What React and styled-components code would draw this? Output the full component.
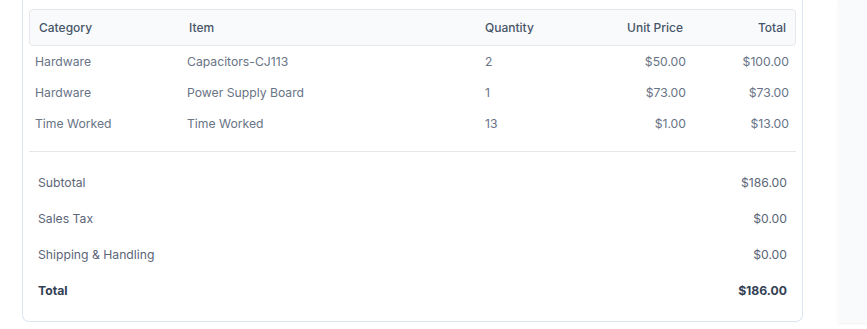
import styled, { createGlobalStyle } from "styled-components";

const GlobalStyle = createGlobalStyle`
  body {
    margin: 0;
    background: #ffffff;
    font-family: Inter, "Noto Sans", "Liberation Sans", sans-serif;
  }
`;

const Page = styled.div`
  display: flex;
  align-items: flex-start;
  gap: 35px;
  padding-left: 22px;
  height: 329px;
  overflow: hidden;
`;

const Card = styled.section`
  width: 781px;
  box-sizing: border-box;
  border: 1px solid #dce6f2;
  border-top: none;
  border-radius: 0 0 7px 7px;
  padding: 9px 6px 13px;
  background: #fff;
`;

const HeadRow = styled.div`
  display: grid;
  grid-template-columns: 150px 296px 100px 98px 103px;
  align-items: center;
  height: 37px;
  box-sizing: border-box;
  padding: 0 9px;
  background: #f9fafb;
  border: 1px solid #e5e7eb;
  border-radius: 4px;
  color: #475569;
  font-size: 12px;
  font-weight: 500;
`;

const BodyRow = styled.div`
  display: grid;
  grid-template-columns: 152px 298px 100px 101px 103px;
  align-items: center;
  height: 31px;
  padding: 0 6px;
  color: #687386;
  font-size: 12.2px;
`;

const Cell = styled.span`
  text-align: ${(p) => (p.$right ? "right" : "left")};
  white-space: nowrap;
`;

const Rows = styled.div`
  padding-bottom: 12px;
  border-bottom: 1px solid #e5e7eb;
`;

const Summary = styled.div`
  padding: 12px 9px 0;
`;

const SumRow = styled.div`
  display: flex;
  justify-content: space-between;
  align-items: center;
  height: 36px;
  font-size: 12.2px;
  color: ${(p) => (p.$strong ? "#334155" : "#5b6577")};
  font-weight: ${(p) => (p.$strong ? 700 : 400)};
`;

const Side = styled.aside`
  flex: 1;
  height: 323px;
  background: #f9fafb;
  box-shadow: 0 1px 2px rgba(0, 0, 0, 0.06);
`;

const items = [
  ["Hardware", "Capacitors-CJ113", "2", "$50.00", "$100.00"],
  ["Hardware", "Power Supply Board", "1", "$73.00", "$73.00"],
  ["Time Worked", "Time Worked", "13", "$1.00", "$13.00"],
];

const totals = [
  ["Subtotal", "$186.00"],
  ["Sales Tax", "$0.00"],
  ["Shipping & Handling", "$0.00"],
  ["Total", "$186.00", true],
];

export default function App() {
  return (
    <>
      <GlobalStyle />
      <Page>
        <Card>
          <HeadRow>
            <Cell>Category</Cell>
            <Cell>Item</Cell>
            <Cell>Quantity</Cell>
            <Cell $right>Unit Price</Cell>
            <Cell $right>Total</Cell>
          </HeadRow>
          <Rows>
            {items.map((r, i) => (
              <BodyRow key={i}>
                <Cell>{r[0]}</Cell>
                <Cell>{r[1]}</Cell>
                <Cell>{r[2]}</Cell>
                <Cell $right>{r[3]}</Cell>
                <Cell $right>{r[4]}</Cell>
              </BodyRow>
            ))}
          </Rows>
          <Summary>
            {totals.map(([label, value, strong]) => (
              <SumRow key={label} $strong={strong}>
                <span>{label}</span>
                <span>{value}</span>
              </SumRow>
            ))}
          </Summary>
        </Card>
        <Side />
      </Page>
    </>
  );
}
